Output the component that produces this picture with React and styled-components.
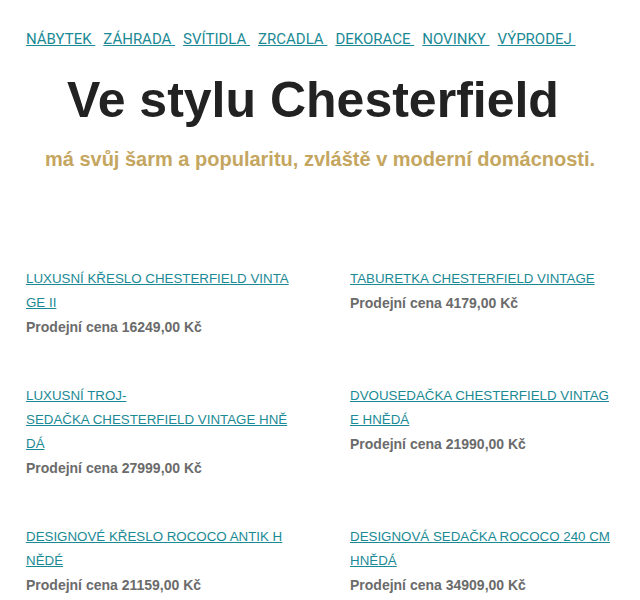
import React from 'react';
import styled, { createGlobalStyle } from 'styled-components';

const GlobalStyle = createGlobalStyle`
  body {
    margin: 0;
    background: #ffffff;
    font-family: "Liberation Sans", Arial, sans-serif;
  }
`;

const navItems = ['NÁBYTEK', 'ZÁHRADA', 'SVÍTIDLA', 'ZRCADLA', 'DEKORACE', 'NOVINKY', 'VÝPRODEJ'];

const products = [
  { title: 'LUXUSNÍ KŘESLO CHESTERFIELD VINTAGE II', price: '16249,00' },
  { title: 'TABURETKA CHESTERFIELD VINTAGE', price: '4179,00' },
  { title: ['LUXUSNÍ TROJ-', 'SEDAČKA CHESTERFIELD VINTAGE HNĚDÁ'], price: '27999,00' },
  { title: 'DVOUSEDAČKA CHESTERFIELD VINTAGE HNĚDÁ', price: '21990,00' },
  { title: 'DESIGNOVÉ KŘESLO ROCOCO ANTIK HNĚDÉ', price: '21159,00' },
  { title: 'DESIGNOVÁ SEDAČKA ROCOCO 240 CM HNĚDÁ', price: '34909,00' },
];

const App = () => {
  return (
    <Page>
      <GlobalStyle />
      <Nav>
        {navItems.map(item => (
          <NavLink href="#" key={item}>{`${item} `}</NavLink>
        ))}
      </Nav>
      <Hero>
        <Title>Ve stylu Chesterfield</Title>
        <Subtitle>má svůj šarm a popularitu, zvláště v moderní domácnosti.</Subtitle>
      </Hero>
      <ProductGrid>
        {products.map((p, i) => (
          <Product key={i}>
            <ProductLink href="#">
              {Array.isArray(p.title) ? (
                <>
                  {p.title[0]}
                  <br />
                  {p.title[1]}
                </>
              ) : (
                p.title
              )}
            </ProductLink>
            <Price>{`Prodejní cena ${p.price} Kč`}</Price>
          </Product>
        ))}
      </ProductGrid>
    </Page>
  );
};

export default App;

const Page = styled.div`
  padding: 30px 26px 0;
`;

const Nav = styled.nav`
  display: flex;
  flex-wrap: wrap;
  gap: 8px;
  font-family: Roboto, "Liberation Sans", sans-serif;
  font-size: 15px;
  line-height: 18px;
`;

const NavLink = styled.a`
  color: #1b8a95;
  text-decoration: underline;
  white-space: pre;
`;

const Hero = styled.header`
  display: flex;
  flex-direction: column;
  align-items: center;
  text-align: center;
  margin-top: 22px;
`;

const Title = styled.h1`
  margin: 0 14px 0 0;
  font-size: 50px;
  line-height: 60px;
  font-weight: 700;
  color: #222222;
`;

const Subtitle = styled.p`
  margin: 17px 0 0;
  font-size: 20px;
  line-height: 24px;
  font-weight: 700;
  color: #c4a660;
`;

const ProductGrid = styled.section`
  display: grid;
  grid-template-columns: 264px 264px;
  column-gap: 60px;
  row-gap: 45px;
  margin-top: 96px;
`;

const Product = styled.div`
  display: flex;
  flex-direction: column;
`;

const ProductLink = styled.a`
  font-size: 13.33px;
  line-height: 24px;
  color: #1b8a95;
  text-decoration: underline;
  word-break: break-all;
`;

const Price = styled.span`
  font-size: 14px;
  line-height: 24px;
  font-weight: 700;
  color: #6b6b6b;
`;
